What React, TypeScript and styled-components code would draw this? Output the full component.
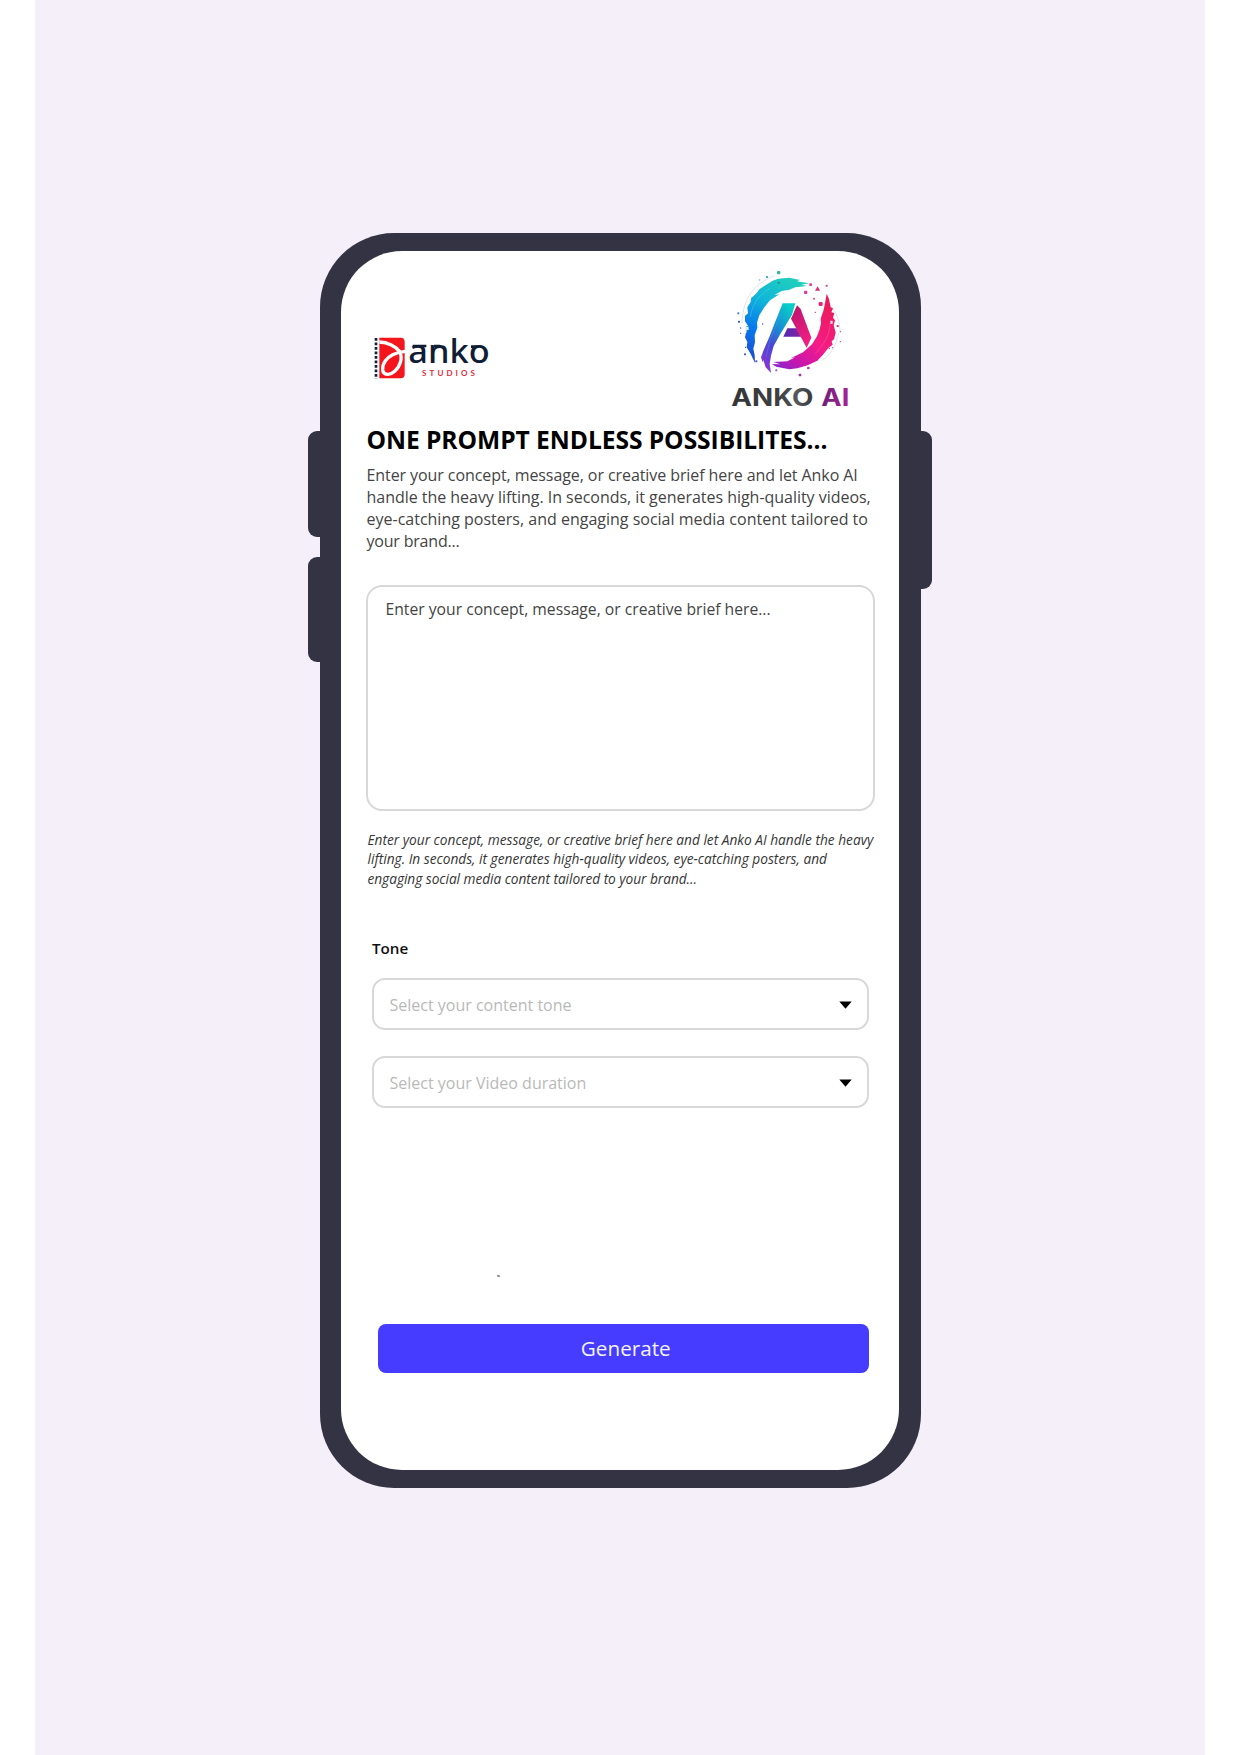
import React from 'react';
import styled, { createGlobalStyle } from 'styled-components';

const GlobalStyle = createGlobalStyle`
  * { box-sizing: border-box; }
  body { margin: 0; background: #fff; font-family: 'Open Sans', 'Noto Sans', sans-serif; }
`;

const Page = styled.main`
  width: 1240px;
  height: 1755px;
  padding: 0 35px;
  overflow: hidden;
`;

const Backdrop = styled.div`
  height: 100%;
  padding-top: 232.5px;
  display: flex;
  justify-content: center;
  align-items: flex-start;
  background: #f5effa;
`;

const Keys = styled.div`
  width: 11.5px;
  padding-top: 198.5px;
  display: flex;
  flex-direction: column;
  gap: 20.5px;
`;

const Key = styled.span<{ $side: 'left' | 'right'; $height: number }>`
  height: ${(p) => p.$height}px;
  background: #343343;
  border-radius: ${(p) => (p.$side === 'left' ? '9px 0 0 9px' : '0 9px 9px 0')};
`;

const Phone = styled.section`
  width: 601px;
  height: 1255.5px;
  padding: 18.5px 21.5px 18px 21.5px;
  background: #343343;
  border-radius: 74px;
`;

const Screen = styled.div`
  height: 100%;
  padding: 0 24.5px;
  display: flex;
  flex-direction: column;
  background: #fff;
  border-radius: 61px;
`;

const Header = styled.header`
  height: 172px;
  flex: none;
  display: flex;
  justify-content: space-between;
  align-items: flex-start;
  padding: 9px 14.5px 0 0;
`;

const StudioMark = styled.svg`
  width: 140px;
  height: 70px;
  margin: 60px 0 0 -6px;
`;

const AiMark = styled.svg`
  width: 140px;
  height: 155px;
`;

const Title = styled.h1`
  margin: 0 0 6.5px 1px;
  font-size: 24.6px;
  line-height: 34px;
  font-weight: 700;
  letter-spacing: -0.06px;
  white-space: nowrap;
  color: #000;
`;

const Intro = styled.p`
  margin: 0 0 33.5px 1px;
  font-size: 16px;
  line-height: 22px;
  color: #444;
`;

const Hint = styled.p`
  margin: 19px 0 50px 2px;
  font-size: 13.7px;
  line-height: 19.5px;
  font-style: italic;
  color: #363636;
`;

const Line = styled.span<{ $tracking?: number }>`
  display: block;
  white-space: nowrap;
  letter-spacing: ${(p) => p.$tracking ?? 0}px;
`;

const Prompt = styled.div`
  width: 509px;
  height: 225.5px;
  flex: none;
  margin-left: 0.5px;
  padding: 11px 17.5px;
  border: 2px solid #d8d8d8;
  border-radius: 16px;
  font-size: 15.7px;
  line-height: 22px;
  color: #444;
`;

const Form = styled.div`
  width: 497px;
  margin-left: 6.5px;
  display: flex;
  flex-direction: column;
`;

const Label = styled.div`
  margin-bottom: 20px;
  font-size: 15.2px;
  line-height: 20px;
  font-weight: 600;
  color: #111;
`;

const Select = styled.div`
  height: 51.5px;
  margin-bottom: 26.5px;
  padding: 3px 15.5px 0 15.5px;
  display: flex;
  align-items: center;
  justify-content: space-between;
  border: 2px solid #d8d8d8;
  border-radius: 13px;
  font-size: 16px;
  line-height: 22px;
  color: #b9b9b9;
`;

const Caret = styled.svg`
  width: 13px;
  height: 8px;
  margin-bottom: 1px;
`;

const Speck = styled.span`
  width: 3px;
  height: 2px;
  margin: 141px 0 47px 125px;
  border-radius: 1px;
  background: #8a8a8a;
  transform: rotate(25deg);
`;

const Generate = styled.button`
  height: 49px;
  margin-left: 5.5px;
  padding: 0 0 2px 5px;
  border: 0;
  border-radius: 8px;
  background: #453cff;
  color: #f4f3ff;
  font: 400 20.7px/28px 'Open Sans', 'Noto Sans', sans-serif;
`;

function Studio() {
  return (
    <StudioMark viewBox="0 0 420 210">
      <path d="M48 54V176" stroke="#14203a" strokeWidth="8" strokeDasharray="8 5.5" />
      <path d="M58 53H122Q134 53 134 66V163Q134 175 122 175H58Z" fill="#f5161d" />
      <path d="M58 66C84 66 108 80 118 94C130 112 120 140 104 154C90 167 70 166 68 150C66 130 82 112 98 104C110 98 122 95 136 94" fill="none" stroke="#fff" strokeWidth="10" />
      <text x="145" y="130" fontFamily="Noto Sans, sans-serif" fontWeight="500" fontSize="99" textLength="244" lengthAdjust="spacingAndGlyphs" fill="#101d35">anko</text>
      <path d="M158 78H199M222 78H240M333 80H352" stroke="#101d35" strokeWidth="8" />
      <text x="186" y="167" fontFamily="Lato, sans-serif" fontWeight="700" fontSize="24" textLength="159" fill="#e22b3c">STUDIOS</text>
    </StudioMark>
  );
}

const dots: [number, number, number, string][] = [
  [176, 38, 5, '#35b99c'], [141, 51, 3, '#3aa9ae'], [119, 60, 2, '#63b4c4'], [176, 68, 3, '#188b98'],
  [272, 74, 4, '#e7347e'], [257, 97, 5, '#d93aa0'], [320, 77, 3, '#bd4a83'], [282, 116, 3, '#da5c9a'],
  [302, 132, 6, '#e92673'], [286, 157, 2, '#d24584'], [55, 160, 3, '#4c83a7'], [57, 185, 3, '#315ba4'],
  [62, 204, 2, '#4371ba'], [62, 220, 2, '#547cc5'], [77, 262, 2, '#3c5fc6'], [75, 283, 3, '#4561c6'],
  [128, 192, 2, '#4268ad'], [353, 198, 3, '#b73a83'], [361, 215, 2, '#b7609a'], [361, 245, 2, '#ae5b98'],
  [328, 265, 2, '#c64aa4'], [265, 324, 4, '#b748ac'], [240, 345, 4, '#98359c'], [169, 331, 3, '#b052b6'],
  [109, 304, 3, '#4a56c4'], [338, 263, 2, '#d65aa9'],
];

function AnkoAi() {
  return (
    <AiMark viewBox="0 0 420 465">
      <defs>
        <linearGradient id="cool" x1="0.65" y1="0" x2="0.25" y2="1">
          <stop offset="0" stopColor="#1fcdbd" />
          <stop offset="0.35" stopColor="#10b6d9" />
          <stop offset="0.7" stopColor="#0878ec" />
          <stop offset="1" stopColor="#184fd2" />
        </linearGradient>
        <linearGradient id="hot" x1="0.8" y1="0" x2="0.15" y2="1">
          <stop offset="0" stopColor="#e91c55" />
          <stop offset="0.5" stopColor="#f51b86" />
          <stop offset="0.8" stopColor="#cb16ac" />
          <stop offset="1" stopColor="#8f24c9" />
        </linearGradient>
        <linearGradient id="leg" x1="0.7" y1="0" x2="0.25" y2="1">
          <stop offset="0" stopColor="#09cbc8" />
          <stop offset="0.35" stopColor="#168fd4" />
          <stop offset="0.65" stopColor="#4a46d4" />
          <stop offset="1" stopColor="#8b35d6" />
        </linearGradient>
        <linearGradient id="limb" x1="0" y1="0" x2="0.4" y2="1">
          <stop offset="0" stopColor="#b5166d" />
          <stop offset="1" stopColor="#f01d82" />
        </linearGradient>
        <linearGradient id="bar" x1="0" y1="0" x2="1" y2="0">
          <stop offset="0" stopColor="#4c2bb3" />
          <stop offset="1" stopColor="#8a1f9e" />
        </linearGradient>
        <linearGradient id="steel" gradientUnits="userSpaceOnUse" x1="35" y1="0" x2="280" y2="0">
          <stop offset="0" stopColor="#343537" />
          <stop offset="0.6" stopColor="#3f4042" />
          <stop offset="0.8" stopColor="#55585b" />
          <stop offset="1" stopColor="#36383a" />
        </linearGradient>
        <linearGradient id="plum" gradientUnits="userSpaceOnUse" x1="305" y1="0" x2="385" y2="0">
          <stop offset="0" stopColor="#6d2279" />
          <stop offset="1" stopColor="#a52295" />
        </linearGradient>
      </defs>
      <path d="M66 190C68 120 99 70 164 47M361 218C358 180 350 157 330 136M356 220C348 258 332 284 306 302" fill="none" stroke="#a9bcc9" strokeWidth="1.2" />
      <path d="M105 309L92 282L80 262L82 246L75 232L78 218L75 202L84 197L75 184L75 168L84 160L82 142L92 126L93 115L108 101L119 87L141 73L158 62L175 56L207 53L240 60L230 64L267 70L244 74L262 78L226 82L208 89L185 93L163 105L178 103L150 121L132 143L118 166L111 188L112 203L104 226L105 247L100 266L104 285Z" fill="url(#cool)" />
      <path d="M151 85C113 105 96 137 91 171" fill="none" stroke="#55ddef" strokeWidth="3" opacity="0.4" />
      <path d="M320 101L327 117L332 142L339 145L334 157L343 159L339 173L345 181L341 196L347 218L342 238L335 244L338 254L325 264L309 284L292 302L263 316L232 325L208 328L192 325L169 320L156 312L181 313L160 306L202 304L226 292L212 295L249 277L276 253L291 229L299 208L303 190L302 176L306 164L310 153L315 130Z" fill="url(#hot)" />
      <path d="M330 190C330 221 315 251 286 280" fill="none" stroke="#ff77bd" strokeWidth="3" opacity="0.35" />
      <path d="M188 130H226L216 164L181 222L161 258L153 287L149 312L153 339L137 322L130 300L128 307L123 292L131 270L149 229L164 190Z" fill="url(#leg)" />
      <path d="M184 157L151 239L138 290" fill="none" stroke="#45a9ef" strokeWidth="3" opacity="0.35" />
      <path d="M231 136L242 147L274 233L260 263L213 176Z" fill="url(#limb)" />
      <path d="M202 205H229L243 230H190Z" fill="url(#bar)" />
      <path d="M293 79L300 92H285Z" fill="#d62b73" />
      <path d="M75 200H86V210H80V218H73ZM331 182H338V191H331Z" fill="#fff" opacity="0.85" />
      {dots.map(([x, y, r, color]) => (
        <rect key={`${x}-${y}`} x={x - r} y={y - r} width={r * 2} height={r * 2} rx={r * 0.6} fill={color} />
      ))}
      <g fontFamily="Inter, sans-serif" fontWeight="700" fontSize="71">
        <text x="34" y="437" textLength="246" lengthAdjust="spacingAndGlyphs" fill="url(#steel)">ANKO</text>
        <text x="304" y="437" textLength="84" lengthAdjust="spacingAndGlyphs" fill="url(#plum)">AI</text>
      </g>
    </AiMark>
  );
}

function Dropdown({ children }: { children: string }) {
  return (
    <Select role="combobox">
      <span>{children}</span>
      <Caret viewBox="0 0 13 8"><path d="M0.3 0.5H12.7L6.5 7.7Z" /></Caret>
    </Select>
  );
}

export default function App() {
  return (
    <Page>
      <GlobalStyle />
      <Backdrop>
        <Keys>
          <Key $side="left" $height={105.5} />
          <Key $side="left" $height={105} />
        </Keys>
        <Phone>
          <Screen>
            <Header>
              <Studio />
              <AnkoAi />
            </Header>
            <Title>ONE PROMPT ENDLESS POSSIBILITES...</Title>
            <Intro>
              <Line $tracking={-0.08}>Enter your concept, message, or creative brief here and let Anko AI</Line>
              <Line $tracking={-0.03}>handle the heavy lifting. In seconds, it generates high-quality videos,</Line>
              <Line>eye-catching posters, and engaging social media content tailored to</Line>
              <Line $tracking={-0.2}>your brand...</Line>
            </Intro>
            <Prompt>Enter your concept, message, or creative brief here...</Prompt>
            <Hint>
              <Line>Enter your concept, message, or creative brief here and let Anko AI handle the heavy</Line>
              <Line>lifting. In seconds, it generates high-quality videos, eye-catching posters, and</Line>
              <Line $tracking={-0.04}>engaging social media content tailored to your brand...</Line>
            </Hint>
            <Form>
              <Label>Tone</Label>
              <Dropdown>Select your content tone</Dropdown>
              <Dropdown>Select your Video duration</Dropdown>
              <Speck />
              <Generate>Generate</Generate>
            </Form>
          </Screen>
        </Phone>
        <Keys>
          <Key $side="right" $height={158} />
        </Keys>
      </Backdrop>
    </Page>
  );
}
